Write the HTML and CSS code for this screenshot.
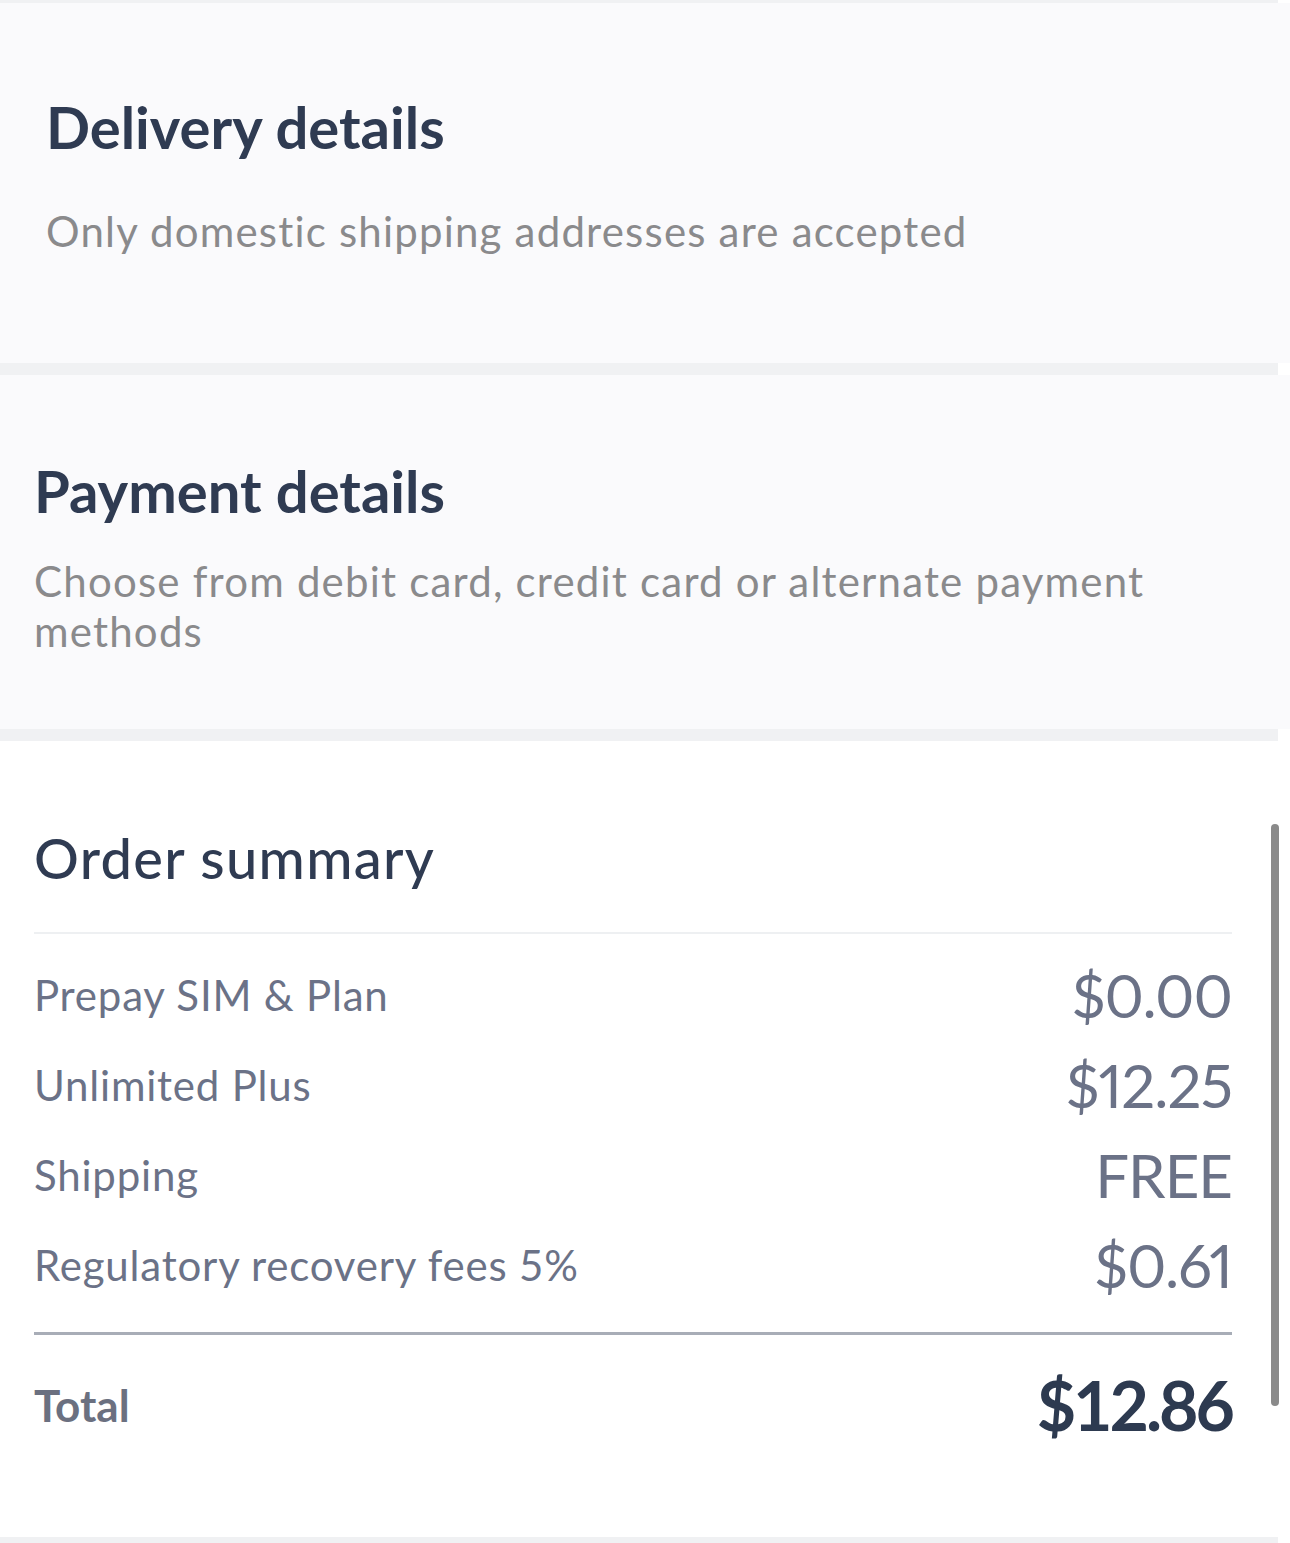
FILE: index.html
```html
<!DOCTYPE html>
<html lang="en">
<head>
<meta charset="utf-8">
<title>Checkout</title>
<link rel="stylesheet" href="styles.css">
</head>
<body>
<div class="page">
  <div class="band band-top"></div>
  <section class="card card-delivery">
    <h2 class="card-title">Delivery details</h2>
    <p class="card-sub sub-delivery">Only domestic shipping addresses are accepted</p>
  </section>
  <div class="band band-mid"></div>
  <section class="card card-payment">
    <h2 class="card-title">Payment details</h2>
    <p class="card-sub sub-payment">Choose from debit card, credit card or alternate payment methods</p>
  </section>
  <div class="band band-mid"></div>
  <section class="summary">
    <h2 class="summary-title">Order summary</h2>
    <div class="rule-light"></div>
    <div class="rows">
      <div class="row"><span class="label">Prepay SIM &amp; Plan</span><span class="value">$0.00</span></div>
      <div class="row"><span class="label">Unlimited Plus</span><span class="value">$12.25</span></div>
      <div class="row"><span class="label">Shipping</span><span class="value">FREE</span></div>
      <div class="row"><span class="label">Regulatory recovery fees 5%</span><span class="value">$0.61</span></div>
    </div>
    <div class="rule-dark"></div>
    <div class="total-row"><span class="total-label">Total</span><span class="total-value">$12.86</span></div>
  </section>
  <div class="band band-bottom"></div>
  <div class="scrollbar"></div>
</div>
</body>
</html>
```
FILE: styles.css
```css
html, body {
  margin: 0;
  padding: 0;
  background: #ffffff;
}
body {
  font-family: "Lato", "Noto Sans", sans-serif;
  -webkit-font-smoothing: antialiased;
}
.page {
  position: relative;
  width: 1290px;
  min-height: 1543px;
  display: flex;
  flex-direction: column;
}
.band {
  width: 1278px;
  background: #f0f1f3;
}
.band-top { height: 3px; }
.band-mid { height: 12px; }
.band-bottom { height: 6px; margin-top: auto; }

.card {
  background: #fafafc;
  display: flex;
  flex-direction: column;
}
.card-delivery {
  height: 360px;
  box-sizing: border-box;
  padding: 89px 0 0 46px;
}
.card-payment {
  height: 354px;
  box-sizing: border-box;
  padding: 81px 120px 0 34px;
}
.card-title {
  margin: 0;
  font-size: 58px;
  line-height: 70px;
  font-weight: 700;
  color: #2f3b52;
  letter-spacing: 0;
}
.card-sub {
  margin: 0;
  font-size: 42px;
  line-height: 50px;
  font-weight: 400;
  color: #8a8a8c;
  letter-spacing: 1.2px;
}
.sub-delivery { margin-top: 44px; }
.sub-payment { margin-top: 30px; }

.summary {
  padding: 83px 58px 0 34px;
  display: flex;
  flex-direction: column;
}
.summary-title {
  margin: 0;
  font-size: 56px;
  line-height: 68px;
  font-weight: 500;
  color: #2f3b52;
  letter-spacing: 1.3px;
}
.rule-light {
  margin-top: 40px;
  height: 2px;
  background: #eef0f2;
}
.rows {
  margin-top: 16px;
  display: flex;
  flex-direction: column;
}
.row {
  height: 90px;
  display: flex;
  align-items: center;
  justify-content: space-between;
}
.label {
  font-size: 42px;
  color: #6b7287;
  letter-spacing: 0.8px;
}
.value {
  font-size: 60px;
  line-height: 1;
  color: #6b7287;
  letter-spacing: -1px;
  font-variant-numeric: proportional-nums;
}
.rule-dark {
  margin-top: 22px;
  height: 3px;
  background: #a8adb7;
}
.total-row {
  height: 140px;
  display: flex;
  align-items: center;
  justify-content: space-between;
}
.total-label {
  font-size: 44px;
  font-weight: 700;
  color: #6b7080;
}
.total-value {
  font-size: 68px;
  line-height: 1;
  font-weight: 700;
  color: #2d3a50;
  letter-spacing: -3px;
}
.scrollbar {
  position: absolute;
  left: 1271px;
  top: 824px;
  width: 8px;
  height: 582px;
  border-radius: 4px;
  background: #8a8a8a;
}
```
